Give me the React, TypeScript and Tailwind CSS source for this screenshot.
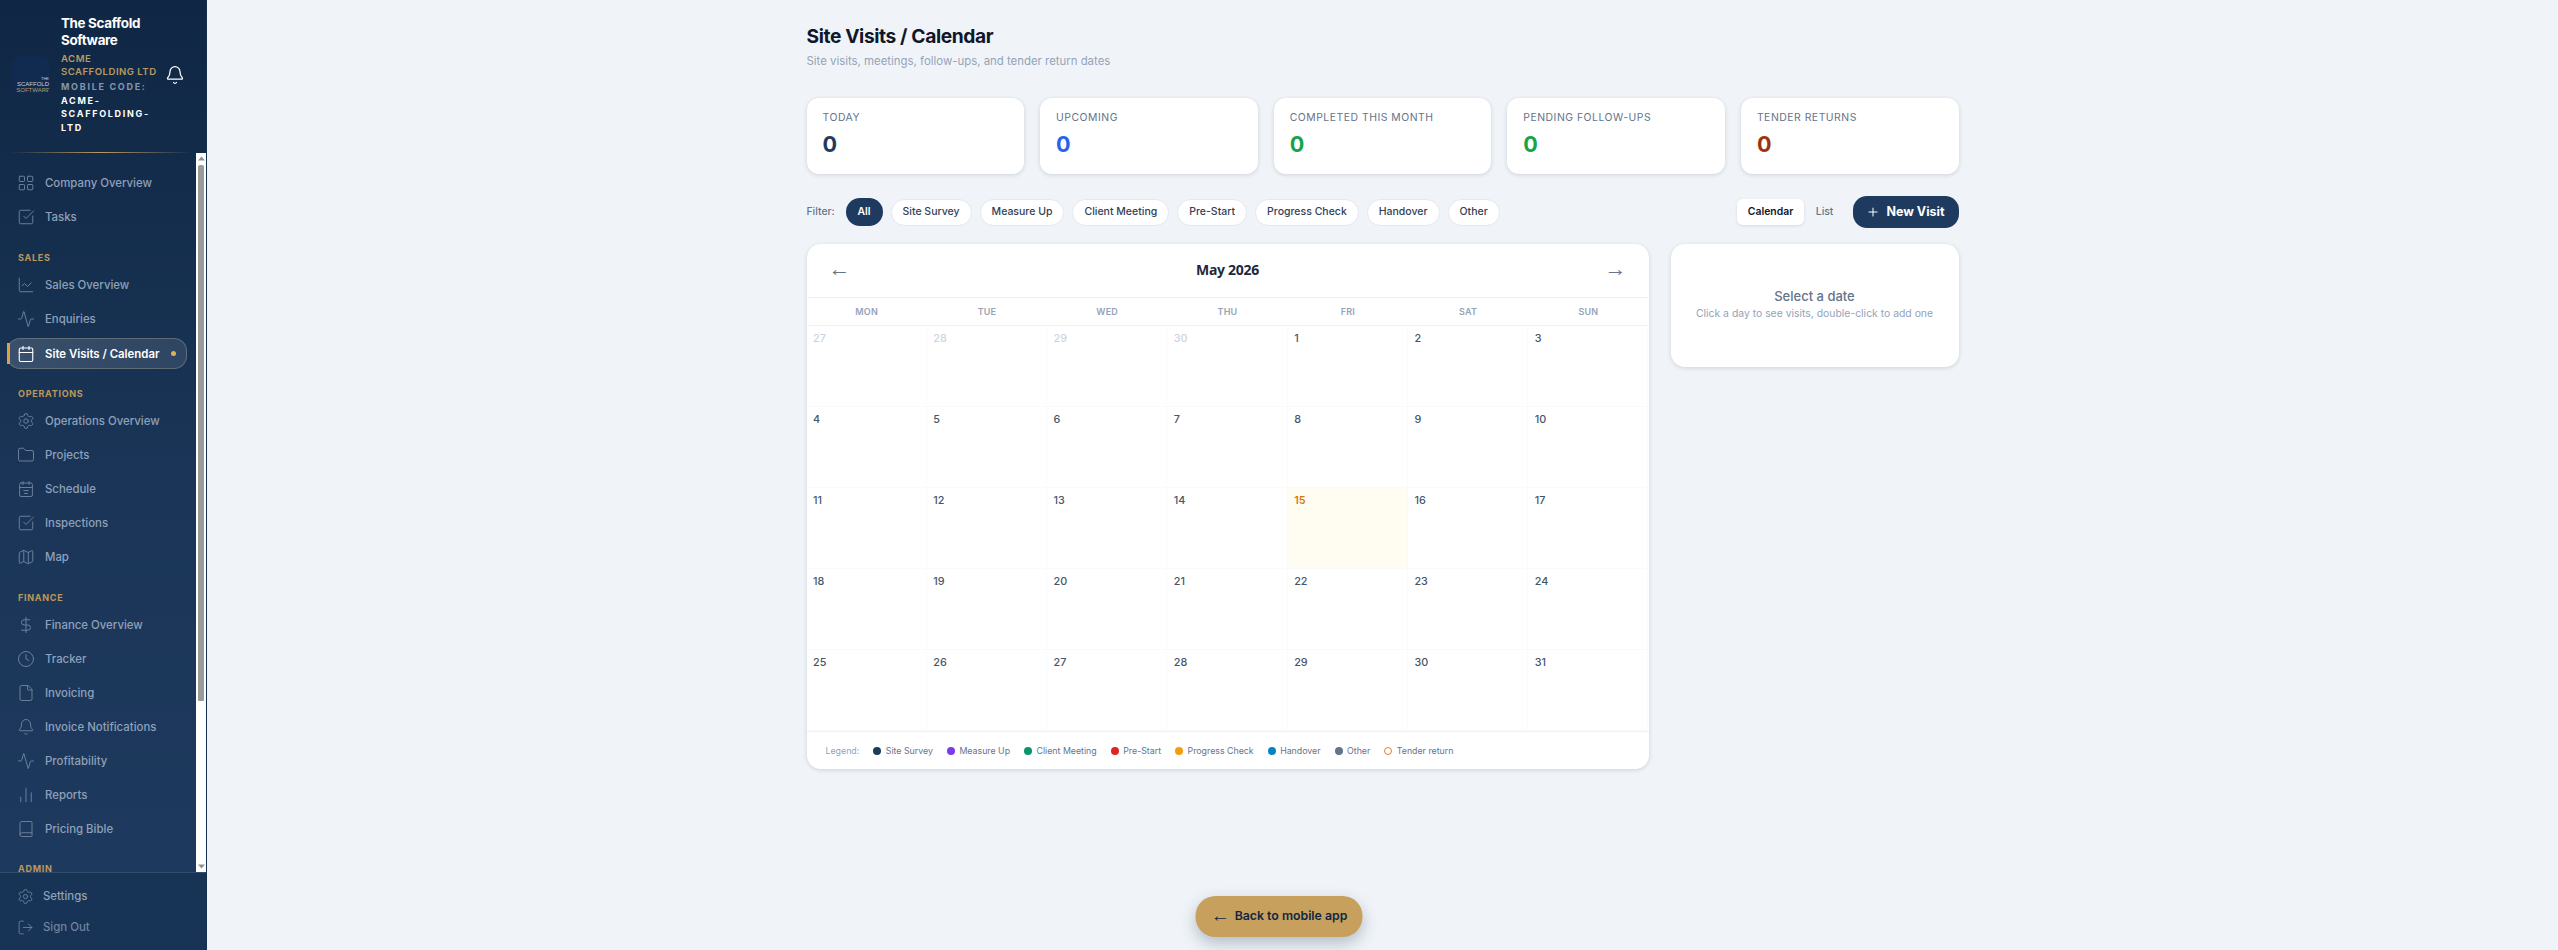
import React from "react";
import { LayoutGrid, SquareCheckBig, LineChart, Activity, Calendar, Settings, Folder, Map, DollarSign, Clock, File, Bell, BarChart2, Book, LogOut, Plus } from "lucide-react";

type Item = { label: string; icon: React.ComponentType<any>; active?: boolean };

function ScheduleIcon({ size = 18, strokeWidth = 1.25, className = "" }: { size?: number; strokeWidth?: number; className?: string }) {
  return (
    <svg width={size} height={size} viewBox="0 0 24 24" fill="none" stroke="currentColor" strokeWidth={strokeWidth} strokeLinecap="round" strokeLinejoin="round" className={className}>
      <path d="M8 2v4M16 2v4" />
      <rect x="3.5" y="4" width="17" height="18" rx="2" />
      <path d="M3.5 10h17M9 14h6M10 18h4" />
    </svg>
  );
}

const sections: { title?: string; items: Item[] }[] = [
  { items: [{ label: "Company Overview", icon: LayoutGrid }, { label: "Tasks", icon: SquareCheckBig }] },
  { title: "SALES", items: [{ label: "Sales Overview", icon: LineChart }, { label: "Enquiries", icon: Activity }, { label: "Site Visits / Calendar", icon: Calendar, active: true }] },
  { title: "OPERATIONS", items: [{ label: "Operations Overview", icon: Settings }, { label: "Projects", icon: Folder }, { label: "Schedule", icon: ScheduleIcon }, { label: "Inspections", icon: SquareCheckBig }, { label: "Map", icon: Map }] },
  { title: "FINANCE", items: [{ label: "Finance Overview", icon: DollarSign }, { label: "Tracker", icon: Clock }, { label: "Invoicing", icon: File }, { label: "Invoice Notifications", icon: Bell }, { label: "Profitability", icon: Activity }, { label: "Reports", icon: BarChart2 }, { label: "Pricing Bible", icon: Book }] },
];

const stats = [
  { label: "TODAY", color: "text-[#1e3a5f]" },
  { label: "UPCOMING", color: "text-[#2563eb]" },
  { label: "COMPLETED THIS MONTH", color: "text-[#16a34a]" },
  { label: "PENDING FOLLOW-UPS", color: "text-[#16a34a]" },
  { label: "TENDER RETURNS", color: "text-[#9a3412]" },
];

const filters = ["Site Survey", "Measure Up", "Client Meeting", "Pre-Start", "Progress Check", "Handover", "Other"];
const days = ["MON", "TUE", "WED", "THU", "FRI", "SAT", "SUN"];
const cells = [27, 28, 29, 30, ...Array.from({ length: 31 }, (_, i) => i + 1)];
const legend = [
  { label: "Site Survey", c: "bg-[#1e3a5f]" },
  { label: "Measure Up", c: "bg-[#7c3aed]" },
  { label: "Client Meeting", c: "bg-[#059669]" },
  { label: "Pre-Start", c: "bg-[#dc2626]" },
  { label: "Progress Check", c: "bg-[#f59e0b]" },
  { label: "Handover", c: "bg-[#0284c7]" },
  { label: "Other", c: "bg-[#64748b]" },
];

function NavRow({ item }: { item: Item }) {
  const I = item.icon;
  if (item.active) {
    return (
      <div className="h-[34px] pt-[2px] pl-[7px] pr-[9px]">
        <div className="relative h-[31px] flex items-center pl-[9px] pr-[10px] rounded-[13px] bg-gradient-to-r from-white/15 to-white/10 border border-[#8d8f86]/50 text-white">
          <span className="absolute -left-px top-[4px] w-[3px] h-[21px] bg-[#d9a24a]" />
          <I size={18} strokeWidth={1.5} className="shrink-0" />
          <span className="ml-[10px] text-[11.4px] leading-4 font-semibold whitespace-nowrap">{item.label}</span>
          <span className="ml-auto w-[5px] h-[5px] rounded-full bg-[#e3ad52]" />
        </div>
      </div>
    );
  }
  return (
    <div className="h-[34px] flex items-center pl-[17px]">
      <I size={18} strokeWidth={1.25} className="shrink-0 text-[#6f84a0]" />
      <span className="ml-[10px] text-[11.4px] leading-4 font-medium whitespace-nowrap text-[#8fa1b9]">{item.label}</span>
    </div>
  );
}

export default function App() {
  return (
    <div className="relative flex h-[950px] w-full overflow-hidden bg-[#f0f4f8] font-['Inter',sans-serif]">
      <aside className="w-[207px] shrink-0 h-full flex flex-col bg-gradient-to-b from-[#0f2744] via-[#1a3557] via-50% to-[#1e3a5f] border-r border-[#16314f]">
        <div className="h-[153px] shrink-0 relative flex items-center pl-3 pb-1">
          <div className="w-[38px] h-[38px] rounded-lg bg-[#102a50] shrink-0 flex flex-col items-end justify-end pr-[1px] text-[6px] leading-[6px] text-[#c8d3e0] overflow-hidden font-['Liberation_Sans',sans-serif]">
            <span className="text-[4px] leading-[5px]">THE</span>
            <span>SCAFFOLD</span>
            <span className="text-[#b99a62] mb-[1px] -mr-[1px] whitespace-nowrap">SOFTWARE</span>
          </div>
          <div className="ml-[11px] w-[100px] shrink-0">
            <div className="text-white text-[13.4px] leading-[17px] font-bold tracking-tight w-[90px]">The Scaffold Software</div>
            <div className="mt-[3px] text-[#b99a62] text-[9.6px] leading-[13px] font-semibold tracking-[0.05em]">ACME SCAFFOLDING LTD</div>
            <div className="mt-[2px] text-[#8696ac] text-[9px] leading-[13.5px] font-bold tracking-[0.19em] whitespace-nowrap">MOBILE CODE:</div>
            <div className="text-white text-[9px] leading-[13.5px] font-bold tracking-[0.19em]">ACME-SCAFFOLDING-LTD</div>
          </div>
          <Bell size={20} strokeWidth={1.5} className="text-white ml-[4px] shrink-0" />
          <div className="absolute left-[10px] right-[14px] bottom-0 h-px bg-gradient-to-r from-transparent via-[#b99a62] to-transparent" />
        </div>
        <div className="flex-1 min-h-0 flex border-b border-white/10">
          <nav className="flex-1 min-w-0 overflow-hidden pt-[13px]">
            {sections.map((s, i) => (
              <div key={i} className={s.title ? "mt-[17px]" : ""}>
                {s.title && <div className="pl-[18px] h-[14px] text-[9px] leading-[14px] font-bold tracking-[0.08em] text-[#bd985a] mb-[3px]">{s.title}</div>}
                {s.items.map((it) => <NavRow key={it.label} item={it} />)}
              </div>
            ))}
            <div className="mt-[16px] pl-[18px] h-[14px] text-[9px] leading-[14px] font-bold tracking-[0.08em] text-[#bd985a]">ADMIN</div>
          </nav>
          <div className="w-[10px] shrink-0 bg-white flex flex-col items-center">
            <svg width="7" height="5" viewBox="0 0 7 5" className="mt-[3px] shrink-0"><path d="M3.5 0.5L7 4.5H0z" fill="#8f8f8f" /></svg>
            <div className="mt-[4px] w-[6px] h-[536px] rounded-t-[2px] rounded-b-[1px] bg-[#9a9a9a] shrink-0" />
            <svg width="7" height="5" viewBox="0 0 7 5" className="mt-auto mb-[3px] shrink-0"><path d="M3.5 4.5L7 0.5H0z" fill="#8f8f8f" /></svg>
          </div>
        </div>
        <div className="h-[77px] shrink-0 pt-[8px] bg-[#0f2744]/35">
          <div className="h-[31px] flex items-center pl-[17px] text-[#8fa1b9]">
            <Settings size={17} strokeWidth={1.25} className="text-[#6f84a0]" />
            <span className="ml-[9px] text-[11.4px] font-medium">Settings</span>
          </div>
          <div className="h-[31px] flex items-center pl-[17px] text-[#6f84a0]">
            <LogOut size={17} strokeWidth={1.25} />
            <span className="ml-[9px] text-[11.4px] font-medium">Sign Out</span>
          </div>
        </div>
      </aside>

      <main className="flex-1 min-w-0 overflow-hidden">
        <div className="w-[1152px] mx-auto">
          <h1 className="mt-[22px] text-[19.2px] leading-[28px] font-bold tracking-[-0.02em] text-[#0f172a]">Site Visits / Calendar</h1>
          <p className="mt-[3px] text-[11.4px] leading-4 text-[#94a3b8]">Site visits, meetings, follow-ups, and tender return dates</p>

          <div className="mt-[29px] grid grid-cols-5 gap-4">
            {stats.map((s) => (
              <div key={s.label} className="h-[76px] rounded-xl bg-white shadow-[0_1px_4px_rgba(15,39,68,0.16)] pl-4 pt-[12px]">
                <div className="text-[10.4px] leading-4 tracking-[0.05em] text-[#64748b]">{s.label}</div>
                <div className={`mt-[4px] text-[21.6px] leading-7 font-bold ${s.color}`}>0</div>
              </div>
            ))}
          </div>

          <div className="mt-[22px] h-8 flex items-center">
            <span className="w-[39px] shrink-0 text-[10.4px] font-medium text-[#64748b]">Filter:</span>
            <span className="h-7 px-[12px] rounded-full bg-[#1e3a5f] text-white text-[10.4px] font-semibold flex items-center">All</span>
            {filters.map((f) => (
              <span key={f} className="ml-[8px] h-[27px] px-[11px] rounded-full bg-white border border-[#e2e8f0] text-[#334155] text-[10.5px] font-medium flex items-center">{f}</span>
            ))}
            <div className="ml-auto flex items-center">
              <span className="h-[26px] px-[10.5px] rounded-md bg-white shadow-[0_1px_3px_rgba(15,39,68,0.12)] text-[#0f172a] text-[10.4px] font-semibold flex items-center">Calendar</span>
              <span className="px-[12px] text-[#64748b] text-[10.4px] font-medium">List</span>
              <button className="ml-[8px] h-8 pl-[13px] pr-[14px] rounded-[14px] bg-[#1e3a5f] text-white text-[12.5px] font-bold flex items-center gap-[6px]">
                <Plus size={14} strokeWidth={1.75} />New Visit
              </button>
            </div>
          </div>

          <div className="mt-[16px] flex items-start gap-[22px]">
            <div className="flex-1 min-w-0 rounded-[14px] bg-white shadow-[0_1px_4px_rgba(15,39,68,0.16)] overflow-hidden">
              <div className="h-[54px] flex items-center justify-between px-[22px] border-b border-[#eef2f7]">
                <span className="text-[#64748b] text-[22px] leading-none -mt-[3px] font-['Liberation_Sans',sans-serif]">←</span>
                <span className="text-[14px] font-bold tracking-[-0.02em] text-[#1e293b] font-['Noto_Sans',sans-serif] -mt-[2px]">May 2026</span>
                <span className="text-[#64748b] text-[22px] leading-none -mt-[3px] font-['Liberation_Sans',sans-serif]">→</span>
              </div>
              <div className="grid grid-cols-7 h-[28px] border-b border-[#eef2f7]">
                {days.map((d) => (
                  <div key={d} className="flex items-center justify-center text-[9px] font-semibold tracking-[0.02em] text-[#94a3b8]">{d}</div>
                ))}
              </div>
              <div className="grid grid-cols-7">
                {cells.map((n, i) => {
                  const muted = i < 4;
                  const today = n === 15 && !muted;
                  return (
                    <div key={i} className={`h-[81px] px-[6.5px] pt-[5px] text-[10.8px] leading-4 font-medium border-b border-r border-[#f8fafc] ${today ? "bg-[#fffdf2] text-[#d97706] font-semibold" : muted ? "text-[#cbd5e1]" : "text-[#475569]"}`}>{n}</div>
                  );
                })}
              </div>
              <div className="h-[38px] border-t border-[#eef2f7] flex items-center pl-[19px] text-[8.8px] text-[#64748b]">
                <span className="text-[#94a3b8] mr-[14px]">Legend:</span>
                {legend.map((l) => (
                  <span key={l.label} className="flex items-center mr-[14px]">
                    <span className={`w-2 h-2 rounded-full mr-[4.5px] ${l.c}`} />{l.label}
                  </span>
                ))}
                <span className="flex items-center">
                  <span className="w-2 h-2 rounded-full border border-[#ea7a2f] mr-[4.5px]" />Tender return
                </span>
              </div>
            </div>
            <div className="w-[288px] h-[123px] shrink-0 rounded-[14px] bg-white shadow-[0_1px_4px_rgba(15,39,68,0.16)] flex flex-col items-center justify-center pb-[3px]">
              <div className="text-[13px] leading-5 font-medium text-[#64748b]">Select a date</div>
              <div className="text-[10.4px] leading-4 text-[#94a3b8]">Click a day to see visits, double-click to add one</div>
            </div>
          </div>
        </div>
      </main>

      <button className="absolute left-1/2 -translate-x-1/2 bottom-[13px] h-[41px] w-[167px] rounded-[20px] bg-[#c6a05c] text-[#0f2744] text-[12.3px] font-semibold flex items-center justify-center gap-[5px] shadow-[0_6px_16px_rgba(15,39,68,0.28)]">
        <span className="text-[19px] leading-none font-bold -mt-[3px] font-['Liberation_Sans',sans-serif]">←</span>Back to mobile app
      </button>
    </div>
  );
}
